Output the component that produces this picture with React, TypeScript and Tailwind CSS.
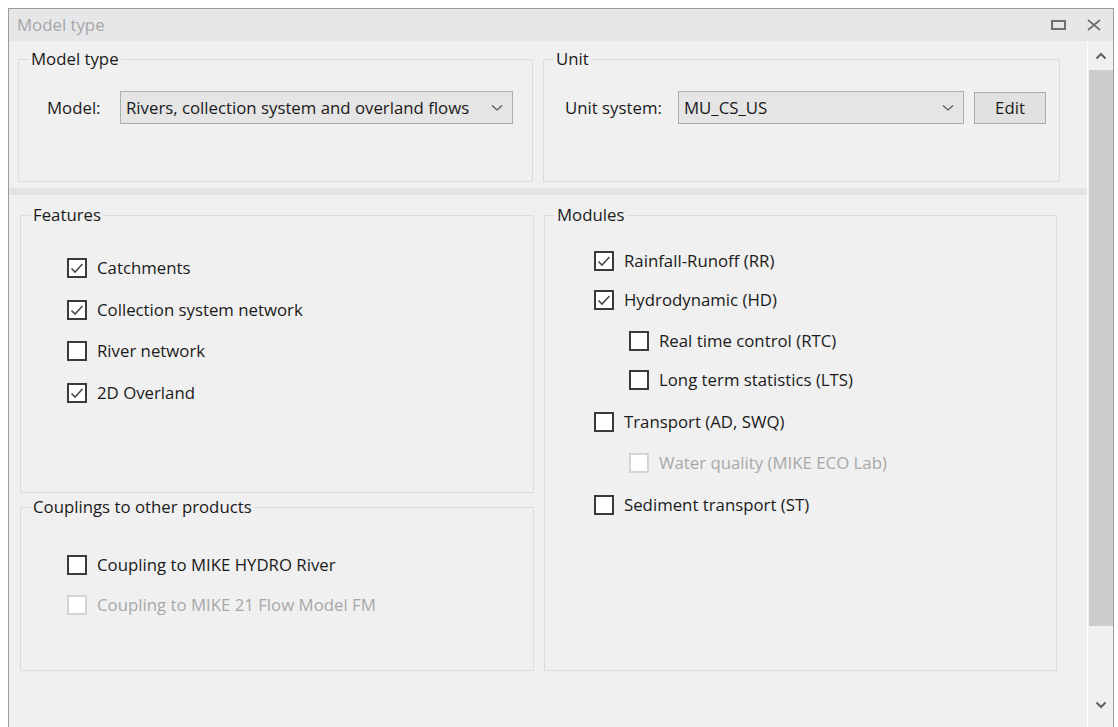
import clsx from 'clsx';

type CheckProps = {
  label: string;
  checked?: boolean;
  disabled?: boolean;
  className?: string;
};

function CheckBox({ label, checked, disabled, className }: CheckProps) {
  return (
    <div className={clsx('flex h-5 items-center gap-[10px]', className)}>
      <span
        className={clsx(
          'flex h-5 w-5 shrink-0 items-center justify-center border-2 bg-white',
          disabled ? 'border-[#d4d4d4]' : 'border-[#3a3a3a]'
        )}
      >
        {checked && (
          <svg width="16" height="16" viewBox="0 0 16 16" fill="none">
            <path d="M2.5 8.5 L6 12 L13.5 4" stroke="#4a4a4a" strokeWidth="1.6" />
          </svg>
        )}
      </span>
      <span className={clsx('whitespace-nowrap', disabled ? 'text-[#a8a8a8]' : 'text-[#1a1a1a]')}>
        {label}
      </span>
    </div>
  );
}

function GroupBox({
  title,
  className,
  children,
}: {
  title: string;
  className?: string;
  children?: React.ReactNode;
}) {
  return (
    <fieldset className={clsx('border border-[#dcdcdc] p-0', className)}>
      <legend className="ml-[10px] px-[2px] leading-5 text-[#1a1a1a]">{title}</legend>
      {children}
    </fieldset>
  );
}

function Chevron() {
  return (
    <svg width="12" height="8" viewBox="0 0 12 8" fill="none">
      <path d="M1 1.5 L6 6 L11 1.5" stroke="#5a5a5a" strokeWidth="1.3" />
    </svg>
  );
}

function ComboBox({ value, className }: { value: string; className?: string }) {
  return (
    <div
      className={clsx(
        'flex h-[33px] items-center justify-between border border-[#adadad] bg-[#e5e5e5] pl-[5px] pr-[9px] text-[#1a1a1a]',
        className
      )}
    >
      <span className="whitespace-nowrap">{value}</span>
      <Chevron />
    </div>
  );
}

// vertical spacing between module rows
const modules = [
  { label: 'Rainfall-Runoff (RR)', checked: true, mt: 'mt-0' },
  { label: 'Hydrodynamic (HD)', checked: true, mt: 'mt-[19px]' },
  { label: 'Real time control (RTC)', sub: true, mt: 'mt-[21px]' },
  { label: 'Long term statistics (LTS)', sub: true, mt: 'mt-[19px]' },
  { label: 'Transport (AD, SWQ)', mt: 'mt-[22px]' },
  { label: 'Water quality (MIKE ECO Lab)', sub: true, disabled: true, mt: 'mt-[21px]' },
  { label: 'Sediment transport (ST)', mt: 'mt-[22px]' },
];

export default function App() {
  return (
    <div
      className="h-[727px] w-[1118px] overflow-hidden bg-white pl-2 pr-1 pt-2 text-[16.8px]"
      style={{ fontFamily: '"Open Sans", "Noto Sans", sans-serif' }}
    >
      <div className="flex h-full flex-col border-x border-t border-[#9c9c9c] bg-[#f0f0f0]">
        {/* title bar */}
        <div className="flex h-8 shrink-0 items-center justify-between bg-[#e6e7e9] pl-[8px] pr-[11px]">
          <span className="text-[#a6a6a6]">Model type</span>
          <div className="flex items-center gap-[20px]">
            <svg width="15" height="10" viewBox="0 0 15 10" fill="none">
              <rect x="1" y="1" width="13" height="8" stroke="#707070" strokeWidth="2" />
            </svg>
            <svg width="16" height="12" viewBox="0 0 16 12" fill="none">
              <path d="M2 1 L14 11 M14 1 L2 11" stroke="#707070" strokeWidth="1.8" />
            </svg>
          </div>
        </div>

        <div className="flex min-h-0 flex-1">
          {/* dialog body */}
          <div className="flex min-w-0 flex-1 flex-col">
            <div className="flex gap-[10px] pl-[9px] pt-2">
              <GroupBox title="Model type" className="h-[133px] w-[515px]">
                <div className="mt-[22px] flex items-center pl-[28px]">
                  <span className="w-[73px] text-[#1a1a1a]">Model:</span>
                  <ComboBox value="Rivers, collection system and overland flows" className="w-[393px]" />
                </div>
              </GroupBox>
              <GroupBox title="Unit" className="h-[133px] w-[517px]">
                <div className="mt-[22px] flex items-center pl-[21px]">
                  <span className="w-[113px] text-[#1a1a1a]">Unit system:</span>
                  <ComboBox value="MU_CS_US" className="w-[286px]" />
                  <button className="ml-[10px] h-[32px] w-[72px] border border-[#adadad] bg-[#e1e1e1] text-[#1a1a1a]">
                    Edit
                  </button>
                </div>
              </GroupBox>
            </div>

            {/* splitter */}
            <div className="mt-[6px] h-[7px] shrink-0 bg-[#e3e3e3]" />

            <div className="flex gap-[10px] pl-[11px] pt-[10px]">
              <div className="flex w-[514px] flex-col gap-[4px]">
                <GroupBox title="Features" className="h-[288px]">
                  <div className="mt-[33px] flex flex-col gap-[21.5px] pl-[46px]">
                    <CheckBox label="Catchments" checked />
                    <CheckBox label="Collection system network" checked />
                    <CheckBox label="River network" />
                    <CheckBox label="2D Overland" checked />
                  </div>
                </GroupBox>
                <GroupBox title="Couplings to other products" className="h-[174px]">
                  <div className="mt-[38px] flex flex-col gap-[20px] pl-[46px]">
                    <CheckBox label="Coupling to MIKE HYDRO River" />
                    <CheckBox label="Coupling to MIKE 21 Flow Model FM" disabled />
                  </div>
                </GroupBox>
              </div>

              <GroupBox title="Modules" className="h-[466px] w-[513px]">
                <div className="mt-[26px] flex flex-col pl-[49px]">
                  {modules.map((m) => (
                    <CheckBox
                      key={m.label}
                      label={m.label}
                      checked={m.checked}
                      disabled={m.disabled}
                      className={clsx(m.mt, m.sub && 'ml-[35px]')}
                    />
                  ))}
                </div>
              </GroupBox>
            </div>
          </div>

          {/* vertical scrollbar */}
          <div className="flex w-[26px] shrink-0 flex-col items-center border-l border-white bg-[#f0f0f0]">
            <div className="flex h-[29px] items-center justify-center">
              <svg width="12" height="8" viewBox="0 0 12 8" fill="none">
                <path d="M1.5 6.5 L6 2 L10.5 6.5" stroke="#606060" strokeWidth="2" />
              </svg>
            </div>
            <div className="h-[556px] w-[24px] bg-[#cdcdcd]" />
            <div className="flex-1" />
            <div className="flex h-[26px] items-start justify-center">
              <svg width="12" height="8" viewBox="0 0 12 8" fill="none">
                <path d="M1.5 1.5 L6 6 L10.5 1.5" stroke="#606060" strokeWidth="2" />
              </svg>
            </div>
          </div>
        </div>
      </div>
    </div>
  );
}
